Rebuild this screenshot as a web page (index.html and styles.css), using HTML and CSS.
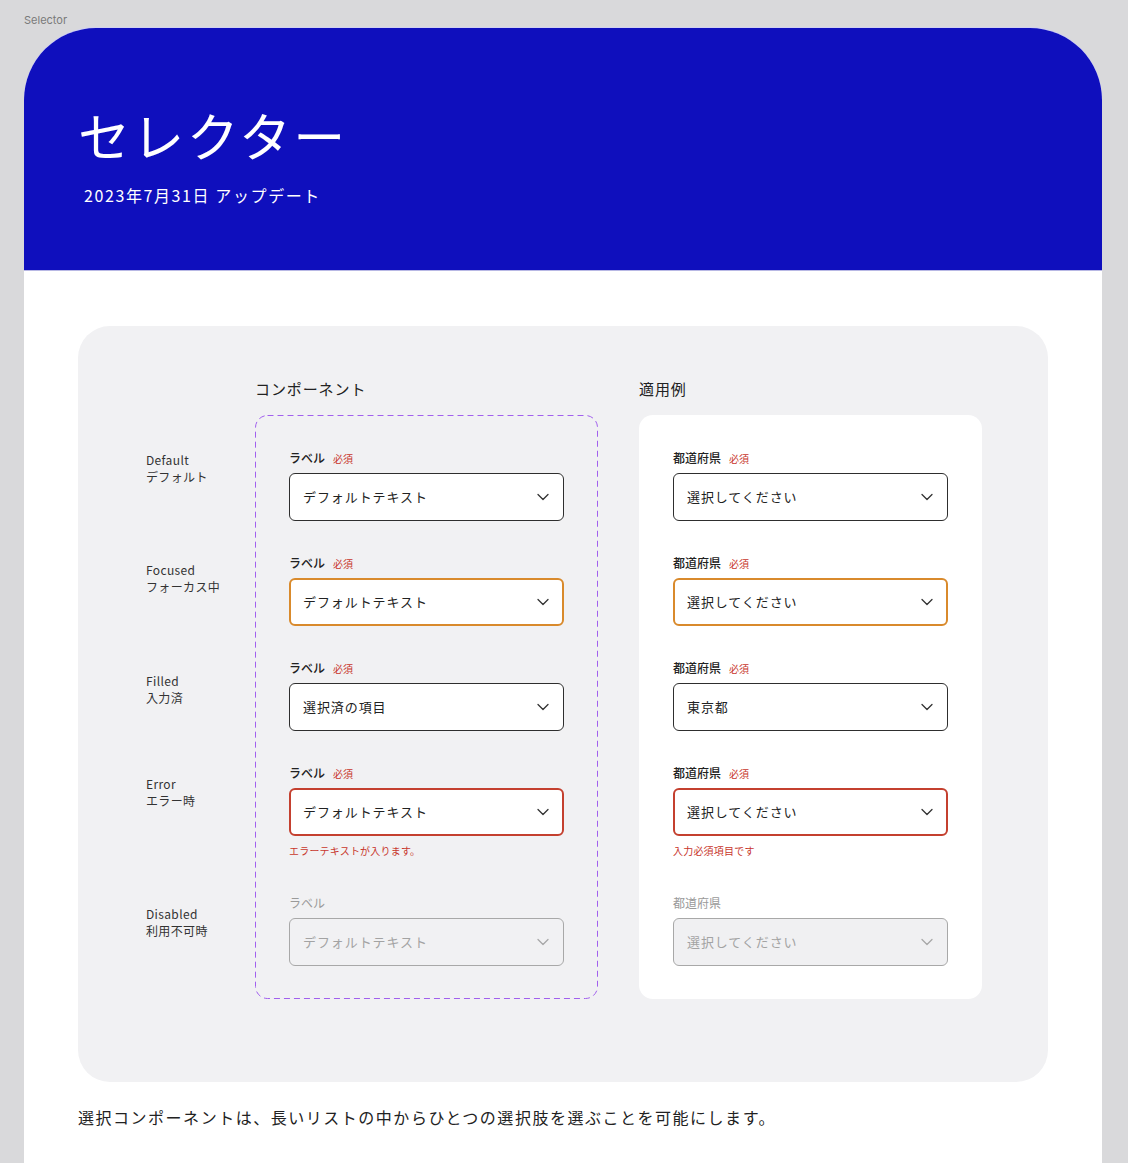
FILE: index.html
```html
<!DOCTYPE html>
<html lang="ja">
<head>
<meta charset="utf-8">
<title>Selector</title>
<link rel="stylesheet" href="styles.css">
</head>
<body>
<div class="page-label">Selector</div>
<div class="frame">
  <header class="hero">
    <h1 class="hero-title">セレクター</h1>
    <p class="hero-date">2023年7月31日 アップデート</p>
  </header>
  <main class="content">
    <section class="panel">
      <div class="states">
        <div class="state">Default<br>デフォルト</div>
        <div class="state s-focused">Focused<br>フォーカス中</div>
        <div class="state s-filled">Filled<br>入力済</div>
        <div class="state s-error">Error<br>エラー時</div>
        <div class="state s-disabled">Disabled<br>利用不可時</div>
      </div>

      <div class="col">
        <h2 class="col-title">コンポーネント</h2>
        <div class="box box-dashed">
          <svg class="dash" aria-hidden="true"><rect x="0.5" y="0.5" width="100%" height="100%" rx="12" ry="12"/></svg>
          <div class="field">
            <div class="field-label">ラベル<span class="req">必須</span></div>
            <div class="select"><span>デフォルトテキスト</span><svg class="chev" viewBox="0 0 12 12"><path d="M1 3.5 L6 8.5 L11 3.5"/></svg></div>
          </div>
          <div class="field">
            <div class="field-label">ラベル<span class="req">必須</span></div>
            <div class="select is-focused"><span>デフォルトテキスト</span><svg class="chev" viewBox="0 0 12 12"><path d="M1 3.5 L6 8.5 L11 3.5"/></svg></div>
          </div>
          <div class="field">
            <div class="field-label">ラベル<span class="req">必須</span></div>
            <div class="select"><span>選択済の項目</span><svg class="chev" viewBox="0 0 12 12"><path d="M1 3.5 L6 8.5 L11 3.5"/></svg></div>
          </div>
          <div class="field">
            <div class="field-label">ラベル<span class="req">必須</span></div>
            <div class="select is-error"><span>デフォルトテキスト</span><svg class="chev" viewBox="0 0 12 12"><path d="M1 3.5 L6 8.5 L11 3.5"/></svg></div>
            <div class="error-msg">エラーテキストが入ります。</div>
          </div>
          <div class="field">
            <div class="field-label is-disabled">ラベル</div>
            <div class="select is-disabled"><span>デフォルトテキスト</span><svg class="chev" viewBox="0 0 12 12"><path d="M1 3.5 L6 8.5 L11 3.5"/></svg></div>
          </div>
        </div>
      </div>

      <div class="col col-example">
        <h2 class="col-title">適用例</h2>
        <div class="box box-card">
          <div class="field">
            <div class="field-label">都道府県<span class="req">必須</span></div>
            <div class="select"><span>選択してください</span><svg class="chev" viewBox="0 0 12 12"><path d="M1 3.5 L6 8.5 L11 3.5"/></svg></div>
          </div>
          <div class="field">
            <div class="field-label">都道府県<span class="req">必須</span></div>
            <div class="select is-focused"><span>選択してください</span><svg class="chev" viewBox="0 0 12 12"><path d="M1 3.5 L6 8.5 L11 3.5"/></svg></div>
          </div>
          <div class="field">
            <div class="field-label">都道府県<span class="req">必須</span></div>
            <div class="select"><span>東京都</span><svg class="chev" viewBox="0 0 12 12"><path d="M1 3.5 L6 8.5 L11 3.5"/></svg></div>
          </div>
          <div class="field">
            <div class="field-label">都道府県<span class="req">必須</span></div>
            <div class="select is-error"><span>選択してください</span><svg class="chev" viewBox="0 0 12 12"><path d="M1 3.5 L6 8.5 L11 3.5"/></svg></div>
            <div class="error-msg">入力必須項目です</div>
          </div>
          <div class="field">
            <div class="field-label is-disabled">都道府県</div>
            <div class="select is-disabled is-disabled-card"><span>選択してください</span><svg class="chev" viewBox="0 0 12 12"><path d="M1 3.5 L6 8.5 L11 3.5"/></svg></div>
          </div>
        </div>
      </div>
    </section>
    <p class="desc">選択コンポーネントは、長いリストの中からひとつの選択肢を選ぶことを可能にします。</p>
  </main>
</div>
</body>
</html>
```

FILE: styles.css
```css
html, body {
  margin: 0;
  padding: 0;
  overflow: hidden;
}
body {
  background: #d9d9db;
  font-family: "Noto Sans CJK JP", "Noto Sans", sans-serif;
  color: #222;
}
.page-label {
  height: 28px;
  box-sizing: border-box;
  padding: 13px 0 0 24px;
  font-family: Inter, "Liberation Sans", sans-serif;
  font-size: 11px;
  line-height: 14px;
  color: #7a7a7a;
}
.frame {
  margin-left: 24px;
  width: 1078px;
  border-radius: 72px 72px 0 0;
  background: #ffffff;
  box-shadow: 0 -1px 0 0 #d0d0f2;
  overflow: hidden;
}
.hero {
  height: 243px;
  box-sizing: border-box;
  background: #0f0fbd;
  border-bottom: 1px solid #b8b8e4;
  padding: 76px 0 0 54px;
  color: #fff;
}
.hero-title {
  margin: 0;
  font-size: 52px;
  line-height: 62px;
  font-weight: 400;
  letter-spacing: 0.045em;
}
.hero-date {
  margin: 17px 0 0 6px;
  font-size: 16px;
  line-height: 24px;
  font-weight: 400;
  letter-spacing: 0.1em;
}
.content {
  padding: 55px 54px 45px;
}
.panel {
  display: flex;
  background: #f1f1f3;
  border-radius: 32px;
  padding: 52px 0 83px 68px;
}
.states {
  width: 109px;
  padding-top: 73px;
  flex: none;
}
.state {
  font-size: 12px;
  line-height: 17px;
  color: #333;
  letter-spacing: 0.03em;
}
.s-focused { margin-top: 76px; }
.s-filled { margin-top: 77px; }
.s-error { margin-top: 69px; }
.s-disabled { margin-top: 96px; }
.col {
  width: 343px;
  flex: none;
}
.col-example {
  margin-left: 41px;
}
.col-title {
  margin: 0 0 15px;
  font-size: 15px;
  line-height: 22px;
  font-weight: 400;
  letter-spacing: 0.06em;
  color: #222;
}
.box {
  position: relative;
  box-sizing: border-box;
  padding: 35px 34px 33px;
}
.box-card {
  background: #fff;
  border-radius: 14px;
}
.dash {
  position: absolute;
  left: 0;
  top: 0;
  width: calc(100% - 1px);
  height: calc(100% - 1px);
  overflow: visible;
  pointer-events: none;
}
.dash rect {
  fill: none;
  stroke: #a260ee;
  stroke-width: 1;
  stroke-dasharray: 6 4;
}
.field + .field {
  margin-top: 34px;
}
.field-label {
  display: flex;
  align-items: baseline;
  height: 16px;
  font-size: 12px;
  line-height: 16px;
  font-weight: 500;
  color: #222;
  margin-bottom: 7px;
}
.field-label.is-disabled {
  color: #9a9a9a;
  font-weight: 400;
}
.req {
  font-size: 10px;
  line-height: 16px;
  color: #c8362c;
  margin-left: 8px;
  font-weight: 400;
}
.select {
  box-sizing: border-box;
  height: 48px;
  display: flex;
  align-items: center;
  justify-content: space-between;
  padding: 0 14px 0 13px;
  background: #fff;
  border: 1px solid #2e2e2e;
  border-radius: 6px;
  font-size: 13px;
  line-height: 20px;
  letter-spacing: 0.07em;
  color: #222;
}
.select span {
  margin-top: -1px;
}
.select.is-focused {
  border: 2px solid #d98a2c;
  padding: 0 13px 0 12px;
}
.select.is-error {
  border: 2px solid #c4402f;
  padding: 0 13px 0 12px;
}
.select.is-disabled {
  background: transparent;
  border-color: #a8a8a8;
  color: #a3a3a3;
}
.select.is-disabled-card {
  background: #f0f0f2;
}
.chev {
  width: 12px;
  height: 12px;
  flex: none;
}
.chev path {
  fill: none;
  stroke: #333;
  stroke-width: 1.3;
  stroke-linecap: round;
  stroke-linejoin: round;
}
.is-disabled .chev path {
  stroke: #a8a8a8;
}
.error-msg {
  margin: 7px 0 0;
  padding-bottom: 2px;
  font-size: 10px;
  line-height: 16px;
  color: #c8362c;
  letter-spacing: 0.02em;
}
.desc {
  margin: 23px 0 0;
  font-size: 16px;
  line-height: 24px;
  font-weight: 400;
  letter-spacing: 0.095em;
  color: #222;
}
```
